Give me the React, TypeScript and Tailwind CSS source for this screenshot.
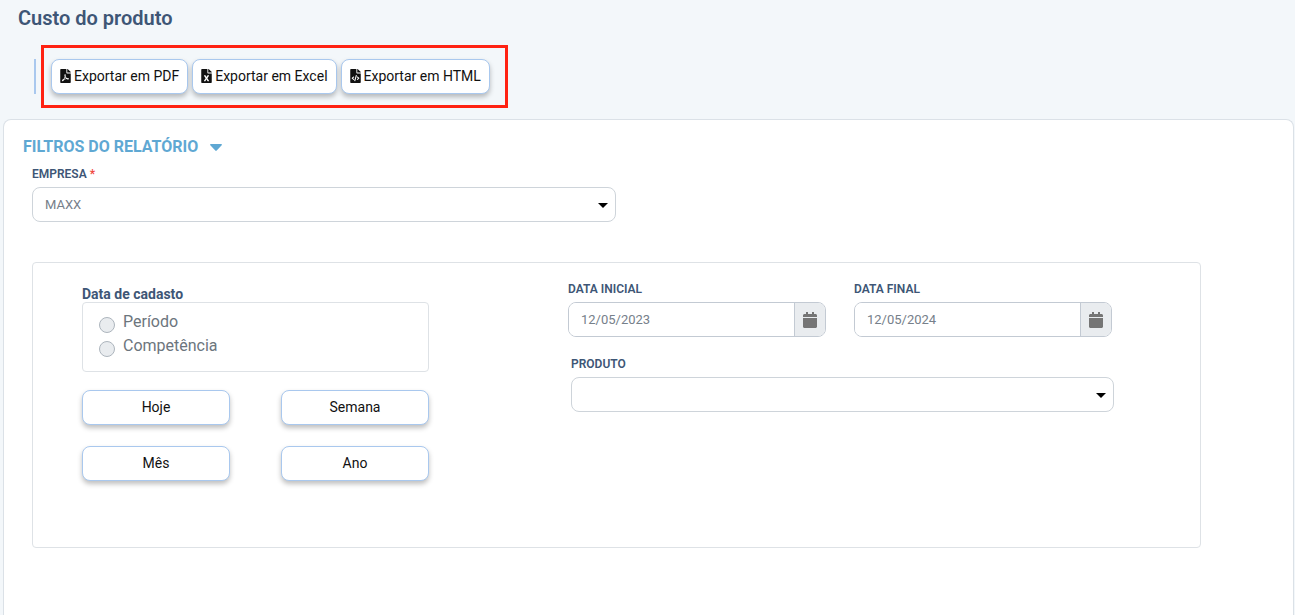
import { useId, useState } from "react";
import type { ReactNode } from "react";
import { FaCalendar, FaFileCode, FaFileExcel, FaFilePdf } from "react-icons/fa";

function ActionButton({ children }: { children: ReactNode }) {
  return (
    <button
      type="button"
      className="flex h-[35px] items-center justify-center gap-[3px] rounded-lg border border-[#a9c8ee] bg-white px-2 pb-[2px] text-sm text-[#111111] shadow-[0_3px_5px_rgba(0,0,0,0.25)]"
    >
      {children}
    </button>
  );
}

function FieldLabel({ htmlFor, children }: { htmlFor: string; children: ReactNode }) {
  return (
    <label htmlFor={htmlFor} className="block h-[22px] text-xs leading-[18px] font-semibold text-[#3e5676]">
      {children}
    </label>
  );
}

function SelectField({ label, required, options }: { label: string; required?: boolean; options: string[] }) {
  const id = useId();
  return (
    <div>
      <FieldLabel htmlFor={id}>
        {label}
        {required && <span className="text-[#f0483e]"> *</span>}
      </FieldLabel>
      <div className="relative">
        <select
          id={id}
          className="block h-[35px] w-full appearance-none rounded-lg border border-[#ced4da] bg-white pr-8 pl-3 text-[13px] text-[#76808a]"
        >
          {options.map((option) => (
            <option key={option}>{option}</option>
          ))}
        </select>
        <svg
          viewBox="0 0 10 5"
          className="pointer-events-none absolute top-4 right-2 h-[5px] w-[10px]"
          aria-hidden="true"
        >
          <path d="M0 0h10L5 5z" fill="#000" />
        </svg>
      </div>
    </div>
  );
}

function DateField({ label, initial }: { label: string; initial: string }) {
  const id = useId();
  const [value, setValue] = useState(initial);
  return (
    <div>
      <FieldLabel htmlFor={id}>{label}</FieldLabel>
      <div className="flex h-[35px] overflow-hidden rounded-lg border border-[#c3cad3]">
        <input
          id={id}
          type="text"
          value={value}
          onChange={(event) => setValue(event.target.value)}
          className="min-w-0 flex-1 bg-white px-3 text-[13px] text-[#76808a]"
        />
        <button
          type="button"
          aria-label="Abrir calendário"
          className="flex w-[31px] items-center justify-center border-l border-[#c3cad3] bg-[#e9ecef] text-base text-[#757575]"
        >
          <FaCalendar />
        </button>
      </div>
    </div>
  );
}

function RadioOption({ label }: { label: string }) {
  return (
    <label className="flex h-6 items-start gap-2 text-base leading-6 text-[#6c757d]">
      <input
        type="radio"
        name="tipo-data"
        className="mt-[7px] size-4 appearance-none rounded-full border border-[#adb5bd] bg-[#e9ecef] checked:border-[5px] checked:border-[#5fa8d3]"
      />
      {label}
    </label>
  );
}

export default function App() {
  return (
    <div className="flex min-h-screen flex-col bg-[#f3f7fa] font-['Roboto',sans-serif]">
      <header className="pb-[11px]">
        <h1 className="pt-1 pl-[18px] text-xl leading-7 font-semibold text-[#3e5676]">Custo do produto</h1>
        <div className="mt-[13px] flex items-center gap-[5px] pl-[34px]">
          <div className="h-[35px] w-[2px] bg-[#a9c8ee]" />
          <div className="flex gap-1 border-[3px] border-[#ff2212] py-[11px] pr-[15px] pl-[7px]">
            <ActionButton>
              <FaFilePdf className="h-[14px] w-[11px]" />
              Exportar em PDF
            </ActionButton>
            <ActionButton>
              <FaFileExcel className="h-[14px] w-[11px]" />
              Exportar em Excel
            </ActionButton>
            <ActionButton>
              <FaFileCode className="h-[14px] w-[11px]" />
              Exportar em HTML
            </ActionButton>
          </div>
        </div>
      </header>

      <main className="mr-px ml-[3px] flex-1 rounded-t-lg border border-b-0 border-[#dbe1e7] bg-white">
        <button
          type="button"
          className="mt-[15px] ml-[19px] flex items-center gap-3 text-base leading-6 font-bold text-[#5fa8d3]"
        >
          FILTROS DO RELATÓRIO
          <svg viewBox="0 0 12 7" className="mt-px h-[7px] w-3" aria-hidden="true">
            <path d="M.8 0h10.4c.7 0 1 .8.5 1.300L6.700 6.600a1 1 0 0 1-1.400 0L.3 1.300C-.2.8.1 0 .8 0z" fill="currentColor" />
          </svg>
        </button>

        <div className="mt-[6px] ml-7 w-[calc(50%-61px)]">
          <SelectField label="EMPRESA" required options={["MAXX"]} />
        </div>

        <section className="mt-10 mr-[92px] ml-7 flex min-h-[286px] rounded border border-[#dee2e6] pr-[86px] pl-[49px]">
          <div className="w-[347px] shrink-0 pt-[23px]">
            <fieldset>
              <legend className="text-sm leading-4 font-bold text-[#3e5676]">Data de cadasto</legend>
              <div className="h-[70px] rounded border border-[#dee2e6] pt-[7px] pl-4">
                <RadioOption label="Período" />
                <RadioOption label="Competência" />
              </div>
            </fieldset>
            <div className="mt-[18px] grid grid-cols-2 gap-x-[51px] gap-y-[21px]">
              <ActionButton>Hoje</ActionButton>
              <ActionButton>Semana</ActionButton>
              <ActionButton>Mês</ActionButton>
              <ActionButton>Ano</ActionButton>
            </div>
          </div>

          <div className="ml-[139px] flex-1 pt-[17px]">
            <div className="mr-[2px] grid grid-cols-2 gap-7">
              <DateField label="DATA INICIAL" initial="12/05/2023" />
              <DateField label="DATA FINAL" initial="12/05/2024" />
            </div>
            <div className="mt-[18px] pl-[3px]">
              <SelectField label="PRODUTO" options={[""]} />
            </div>
          </div>
        </section>
      </main>
    </div>
  );
}
